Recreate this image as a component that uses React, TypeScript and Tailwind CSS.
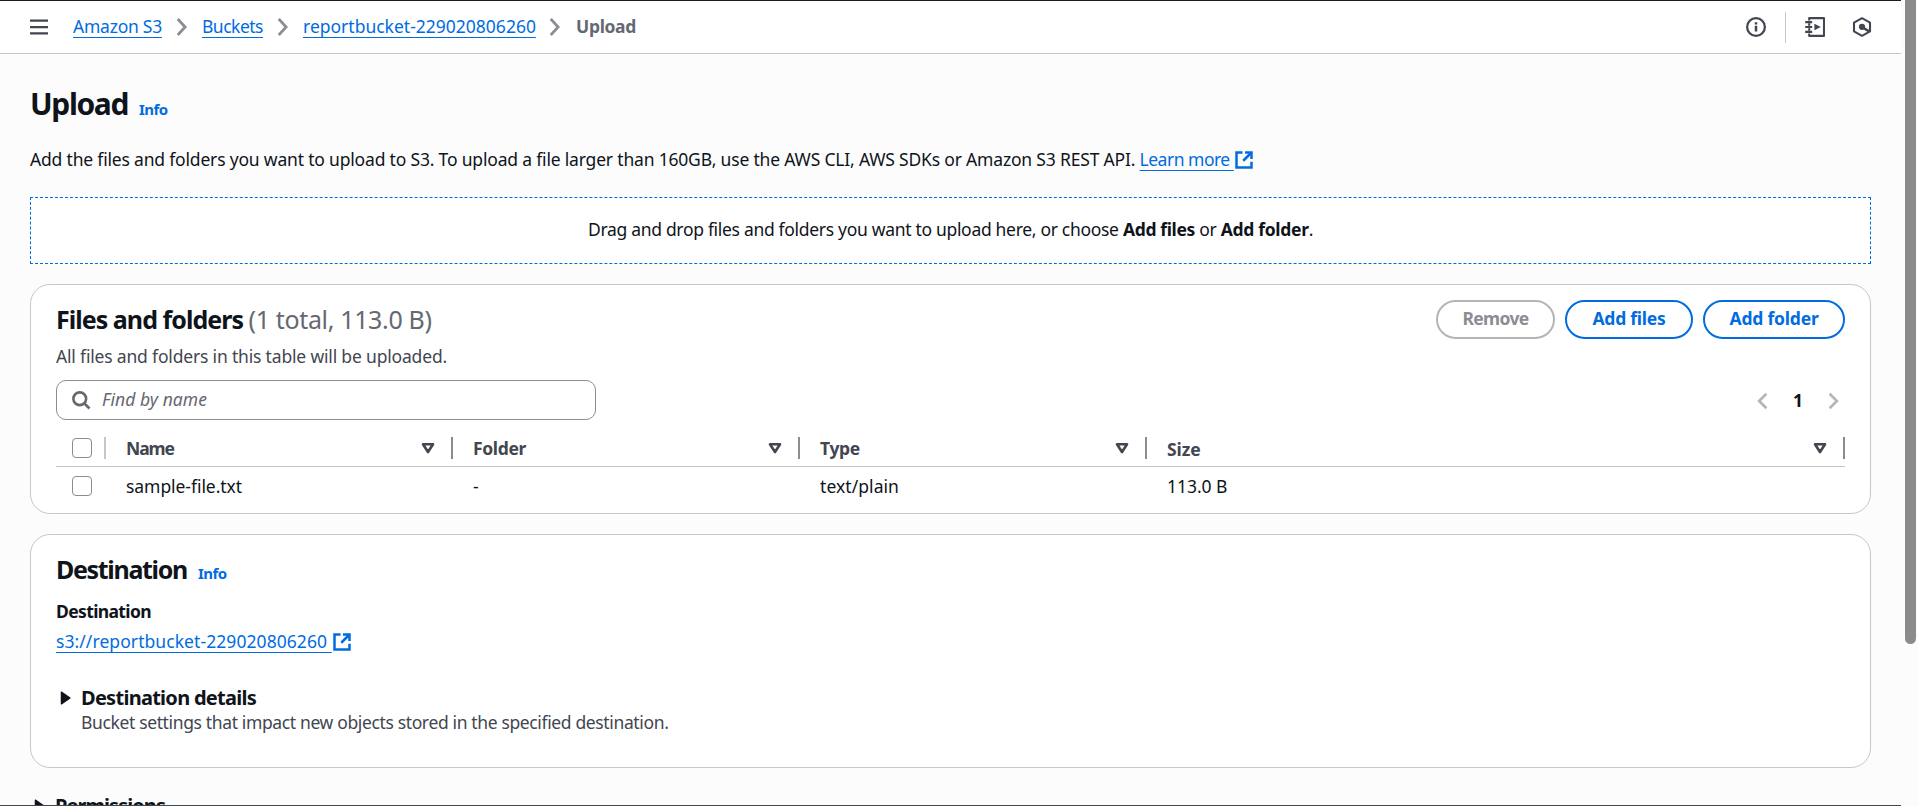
import type { ReactNode } from 'react';

const LINK = 'text-[#006ce0] underline decoration-1 underline-offset-[4px] [text-decoration-skip-ink:none]';

function Chevron({ className = '' }: { className?: string }) {
  return (
    <svg className={`block shrink-0 text-[#8c8c94] ${className}`} width="20" height="20" viewBox="0 0 16 16" fill="none" stroke="currentColor" strokeWidth="2.2">
      <path d="m4.6 1.6 5.9 6.4-5.9 6.4" />
    </svg>
  );
}

function PageChevron({ flip = false }: { flip?: boolean }) {
  return (
    <svg className={`block shrink-0 text-[#b4b4bb] ${flip ? 'rotate-180' : ''}`} width="20" height="20" viewBox="0 0 16 16" fill="none" stroke="currentColor" strokeWidth="2.1">
      <path d="m4.5 2.2 5.8 5.8-5.8 5.8" />
    </svg>
  );
}

function ExternalIcon() {
  return (
    <svg className="block shrink-0 text-[#006ce0]" width="20" height="20" viewBox="0 0 16 16" fill="none" stroke="currentColor" strokeWidth="2">
      <path d="M14 9.4V14H2V2h4.8" />
      <path d="M8.8 2H14v5.2" />
      <path d="m7.4 8.6 6.2-6.2" />
    </svg>
  );
}

function SortIcon() {
  return (
    <svg className="block shrink-0 text-[#424650]" width="20" height="20" viewBox="0 0 16 16" fill="none" stroke="currentColor" strokeWidth="2.1" strokeLinejoin="round">
      <path d="M4 5h8l-4 6.2z" />
    </svg>
  );
}

function Caret() {
  return (
    <svg className="block shrink-0 text-[#0f141a]" width="20" height="20" viewBox="0 0 16 16" fill="currentColor" stroke="currentColor" strokeLinejoin="round">
      <path d="M4.3 3.3v9.4L11.2 8z" />
    </svg>
  );
}

function Checkbox() {
  return <span className="block size-5 shrink-0 rounded-[4px] border-[1.5px] border-[#8c8c94] bg-white" />;
}

function Info({ className = '' }: { className?: string }) {
  return <a className={`text-[15px] font-bold tracking-[-0.566px] text-[#006ce0] ${className}`}>Info</a>;
}

function PillButton({ className, children }: { className: string; children: ReactNode }) {
  return (
    <button className={`flex h-[39px] items-center justify-center rounded-full border-2 bg-white pb-[2px] text-[17.5px] font-bold leading-[25px] ${className}`}>
      {children}
    </button>
  );
}

function Column({ label, className = '', width }: { label: string; className?: string; width: string }) {
  return (
    <div className={`flex h-[22px] items-center border-r-2 border-[#8c8c94] pl-5 pr-[13px] ${width}`}>
      <span className={`flex-1 text-[17.5px] font-bold leading-[22px] text-[#424650] ${className}`}>{label}</span>
      <SortIcon />
    </div>
  );
}

function TopBar() {
  return (
    <header className="flex h-[54px] shrink-0 items-center border-y border-b-[#c6c6cd] border-t-[#161d26] bg-white pl-[29px] pr-[29px] text-[17.5px] leading-[25px]">
      <svg className="block text-[#424650]" width="20" height="20" viewBox="0 0 20 20" fill="currentColor">
        <path d="M1 2.5h18v2.3H1zM1 8.9h18v2.3H1zM1 15.3h18v2.3H1z" />
      </svg>
      <nav className="ml-6 flex items-center pb-px">
        <a className={`w-[89px] whitespace-nowrap pb-px tracking-[-0.24px] ${LINK}`}>Amazon S3</a>
        <Chevron className="ml-[10px]" />
        <a className={`ml-[10px] w-[61px] pb-px tracking-[-0.5px] ${LINK}`}>Buckets</a>
        <Chevron className="ml-[10px]" />
        <a className={`ml-[10px] w-[233px] pb-px ${LINK}`}>reportbucket-229020806260</a>
        <Chevron className="ml-[9px]" />
        <span className="ml-[11px] pb-px font-bold tracking-[-0.33px] text-[#656871]">Upload</span>
      </nav>
      <div className="ml-auto flex items-center text-[#424650]">
        <svg className="block" width="20" height="20" viewBox="0 0 16 16" fill="none" stroke="currentColor" strokeWidth="1.8">
          <circle cx="8" cy="8" r="7.1" />
          <path d="M8 7v4.6M8 4.1v1.8" strokeWidth="2" />
        </svg>
        <span className="ml-[19px] h-[31px] w-px bg-[#c6c6cd]" />
        <svg className="ml-[19px] block" width="20" height="20" viewBox="0 0 20 20" fill="none" stroke="currentColor" strokeWidth="2.1">
          <path d="M4.2 3.4V1.1H19v17.8H4.2v-2.3M4.2 6.2v2.6M4.2 11.2v2.6" strokeLinejoin="round" />
          <path d="M0.2 5.1h7M0.2 10h7M0.2 14.9h7" />
          <path d="M9.4 6.8v6.4l6.4-3.2z" fill="currentColor" stroke="none" />
        </svg>
        <svg className="ml-[27px] block" width="20" height="20" viewBox="0 0 20 20" fill="none" stroke="currentColor" strokeWidth="2.1">
          <path d="M10 1.2 18 5.6v8.8l-8 4.4-8-4.4V5.6z" strokeLinejoin="round" />
          <circle cx="10" cy="9.8" r="3.1" fill="currentColor" stroke="none" />
          <path d="m10 10 7 4.3" strokeWidth="2.6" />
        </svg>
      </div>
    </header>
  );
}

function DropZone() {
  return (
    <div className="mt-[25px] flex h-[67px] items-center justify-center border border-dashed border-[#006ce0] bg-white">
      <p className="whitespace-pre pb-[2px] tracking-[-0.308px]">
        Drag and drop files and folders you want to upload here, or choose{' '}
        <b className="font-bold tracking-[-0.357px]">Add files</b> or{' '}
        <b className="font-bold tracking-[-0.303px]">Add folder</b>.
      </p>
    </div>
  );
}

function FilesCard() {
  return (
    <section className="mt-5 h-[230px] shrink-0 rounded-[20px] border border-[#c6c6cd] bg-white px-[25px] pt-[15px]">
      <div className="flex items-start justify-between">
        <div>
          <h2 className="mt-1 whitespace-nowrap text-[25px] font-bold leading-[30px] tracking-[-0.962px]">
            Files and folders <span className="font-normal tracking-[-0.35px] text-[#656871]">(1 total, 113.0 B)</span>
          </h2>
          <p className="mt-[10px] tracking-[-0.177px] text-[#424650]">All files and folders in this table will be uploaded.</p>
        </div>
        <div className="flex gap-[10px]">
          <PillButton className="w-[119px] border-[#b4b4bb] tracking-[-0.67px] text-[#8c8c94]">Remove</PillButton>
          <PillButton className="w-[128px] border-[#006ce0] tracking-[-0.246px] text-[#006ce0]">Add files</PillButton>
          <PillButton className="w-[142px] border-[#006ce0] tracking-[-0.2px] text-[#006ce0]">Add folder</PillButton>
        </div>
      </div>
      <div className="mt-[11px] flex items-center justify-between">
        <div className="flex h-10 w-[540px] items-center rounded-[10px] border border-[#8c8c94] pl-[14px]">
          <svg className="block text-[#656871]" width="20" height="20" viewBox="0 0 16 16" fill="none" stroke="currentColor" strokeWidth="2.1">
            <circle cx="7" cy="7" r="5.1" />
            <path d="m10.6 10.6 4.2 4.2" />
          </svg>
          <span className="ml-[11px] pb-px italic tracking-[0.06px] text-[#656871]">Find by name</span>
        </div>
        <div className="flex items-center pr-px pt-px">
          <PageChevron flip />
          <span className="mx-[21px] w-[10px] pb-px text-center font-bold">1</span>
          <PageChevron />
        </div>
      </div>
      <div className="mt-[11px] flex h-9 items-center border-b border-[#c6c6cd] pb-px pl-4">
        <Checkbox />
        <span className="ml-3 h-[22px] w-[2px] bg-[#c6c6cd]" />
        <Column label="Name" width="w-[347px]" className="tracking-[-1.05px]" />
        <Column label="Folder" width="w-[347px]" className="tracking-[-0.35px]" />
        <Column label="Type" width="w-[347px]" className="tracking-[-0.31px]" />
        <Column label="Size" width="flex-1" className="pt-px tracking-[-0.11px]" />
      </div>
      <div className="flex h-[38px] items-center pl-4">
        <Checkbox />
        <span className="ml-[34px] w-[347px] tracking-[-0.056px]">sample-file.txt</span>
        <span className="w-[347px]">-</span>
        <span className="w-[347px] tracking-[0.065px]">text/plain</span>
        <span className="tracking-[-0.05px]">113.0 B</span>
      </div>
    </section>
  );
}

function DestinationCard() {
  return (
    <section className="mt-5 h-[234px] shrink-0 rounded-[20px] border border-[#c6c6cd] bg-white pl-[25px] pt-[19px]">
      <div className="flex items-baseline">
        <h2 className="w-[132px] text-[25px] font-bold leading-[30px] tracking-[-1.321px]">Destination</h2>
        <Info className="ml-[10px]" />
      </div>
      <p className="mt-[13px] font-bold tracking-[-0.624px]">Destination</p>
      <p className="mt-[5px] flex items-center">
        <a className={`whitespace-pre tracking-[0.07px] ${LINK}`}>s3://reportbucket-229020806260&nbsp;</a>
        <ExternalIcon />
      </p>
      <div className="mt-[31px] flex">
        <div className="pt-[3px]">
          <Caret />
        </div>
        <div className="ml-[5px]">
          <h3 className="text-[20px] font-bold leading-[25px] tracking-[-0.728px]">Destination details</h3>
          <p className="tracking-[-0.362px] text-[#424650]">
            Bucket settings that impact new objects stored in the specified destination.
          </p>
        </div>
      </div>
    </section>
  );
}

export default function App() {
  return (
    <div className="flex h-[806px] w-full overflow-hidden bg-[#fcfcfd] font-['Noto_Sans',sans-serif] text-[17.5px] leading-[25px] text-[#0f141a]">
      <div className="flex w-[1901px] shrink-0 flex-col overflow-hidden border-b border-[#424650]">
        <TopBar />
        <main className="min-h-0 flex-1 overflow-hidden px-[30px]">
          <div className="flex items-baseline pt-8">
            <h1 className="w-[98px] text-[30px] font-bold leading-[36px] tracking-[-1.377px]">Upload</h1>
            <Info className="ml-[11px]" />
          </div>
          <div className="mt-[25px] flex items-center whitespace-pre">
            <p className="tracking-[-0.185px]">
              Add the files and folders you want to upload to S3. To upload a file larger than 160GB, use the AWS CLI, AWS SDKs or Amazon S3 REST API.{' '}
              <a className={`tracking-[-0.5px] ${LINK}`}>Learn more&nbsp;</a>
            </p>
            <ExternalIcon />
          </div>
          <DropZone />
          <FilesCard />
          <DestinationCard />
          <div className="mt-[25px] flex items-center">
            <Caret />
            <h3 className="ml-[5px] text-[20px] font-bold leading-[25px] tracking-[-0.944px]">Permissions</h3>
          </div>
        </main>
      </div>
      <div className="flex flex-1 pl-1">
        <span className="h-[644px] w-[11px] rounded-b-full bg-[#8b8b8b]" />
      </div>
    </div>
  );
}
